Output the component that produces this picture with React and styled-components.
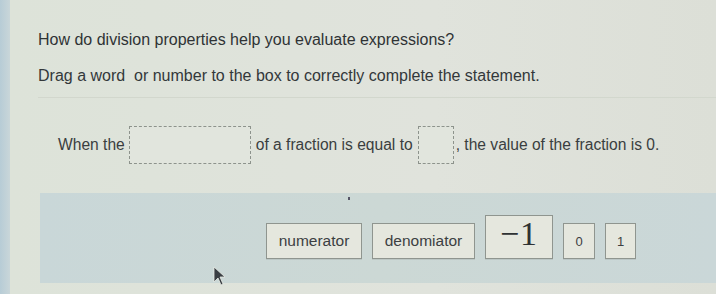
import React from "react";
import styled, { createGlobalStyle } from "styled-components";

const Global = createGlobalStyle`
  html, body { margin: 0; padding: 0; }
  body {
    width: 716px;
    height: 294px;
    overflow: hidden;
    background: #dfe3da;
    font-family: "Liberation Sans", Arial, sans-serif;
    color: #34383a;
  }
`;

const Page = styled.div`
  display: flex;
  width: 716px;
  height: 294px;
  position: relative;
`;

const Strip = styled.div`
  width: 10px;
  flex: none;
  background: linear-gradient(90deg, #b7ccd6, #c9d6d9);
`;

const Main = styled.div`
  flex: 1;
  display: flex;
  flex-direction: column;
  padding-top: 30px;
  background: linear-gradient(90deg, #dde3d9 0%, #e0e3dc 60%, #dcdfd7 100%);
`;

const Heading = styled.p`
  margin: 0 0 0 28px;
  font-size: 16px;
  line-height: 20px;
  color: #2f3335;
`;

const Instruction = styled.p`
  margin: 16px 0 0 28px;
  font-size: 16px;
  line-height: 20px;
  color: #33383a;
  white-space: pre;
`;

const Panel = styled.div`
  margin: 11px 0 0 28px;
  border-top: 1px solid #d2d7cd;
  display: flex;
  flex-direction: column;
`;

const Statement = styled.div`
  display: flex;
  align-items: center;
  padding: 27px 0 0 20px;
  height: 39px;
  font-size: 15.6px;
  color: #3a3e40;
`;

const Text = styled.span`
  padding: 0 ${(p) => p.$pad || 0}px;
  white-space: pre;
`;

const DropBox = styled.span`
  display: inline-block;
  width: ${(p) => p.$w}px;
  height: 38px;
  border: 1px dashed #8d938c;
  box-sizing: border-box;
  background: #e1e5dd;
`;

const Band = styled.div`
  margin: 29px 0 0 2px;
  height: 90px;
  background: linear-gradient(90deg, #c9d7d8 0%, #ccd8d5 50%, #cad7d8 100%);
  display: flex;
  align-items: flex-end;
  gap: 10px;
  padding: 0 0 24px 226px;
  box-sizing: border-box;
`;

const Tile = styled.div`
  box-sizing: border-box;
  width: ${(p) => p.$w}px;
  height: ${(p) => p.$h || 36}px;
  border: 1px solid #8f958f;
  background: #e5e7de;
  display: flex;
  align-items: center;
  justify-content: center;
  font-size: ${(p) => p.$fs || 15.5}px;
  color: #3c4042;
  box-shadow: 0 1px 0 rgba(0,0,0,0.08);
`;

const MathTile = styled(Tile)`
  font-family: "Liberation Serif", "Times New Roman", serif;
  font-size: 34px;
  color: #2e3234;
  padding-bottom: 6px;
  letter-spacing: 1px;
`;

const Cursor = styled.svg`
  position: absolute;
  left: 213px;
  top: 266px;
`;

const Dot = styled.span`
  position: absolute;
  left: 348px;
  top: 197px;
  width: 2px;
  height: 3px;
  background: #556;
`;

export default function App() {
  return (
    <>
      <Global />
      <Page>
        <Strip />
        <Main>
          <Heading>How do division properties help you evaluate expressions?</Heading>
          <Instruction>Drag a word  or number to the box to correctly complete the statement.</Instruction>
          <Panel>
            <Statement>
              <Text>When the</Text>
              <Text $pad={2} />
              <DropBox $w={122} />
              <Text $pad={5}>of a fraction is equal to</Text>
              <DropBox $w={36} />
              <Text $pad={2}>, the value of the fraction is 0.</Text>
            </Statement>
            <Band>
              <Tile $w={96}>numerator</Tile>
              <Tile $w={103}>denomiator</Tile>
              <MathTile $w={68} $h={44}>−1</MathTile>
              <Tile $w={32} $fs={13}>0</Tile>
              <Tile $w={31} $fs={13}>1</Tile>
            </Band>
          </Panel>
        </Main>
        <Dot />
        <Cursor width="14" height="20" viewBox="0 0 14 20">
          <path d="M1 1 L1 16 L5 12 L8 19 L10 18 L7 11 L12 11 Z" fill="#3a3f44" stroke="#e8ece6" strokeWidth="0.8" />
        </Cursor>
      </Page>
    </>
  );
}
